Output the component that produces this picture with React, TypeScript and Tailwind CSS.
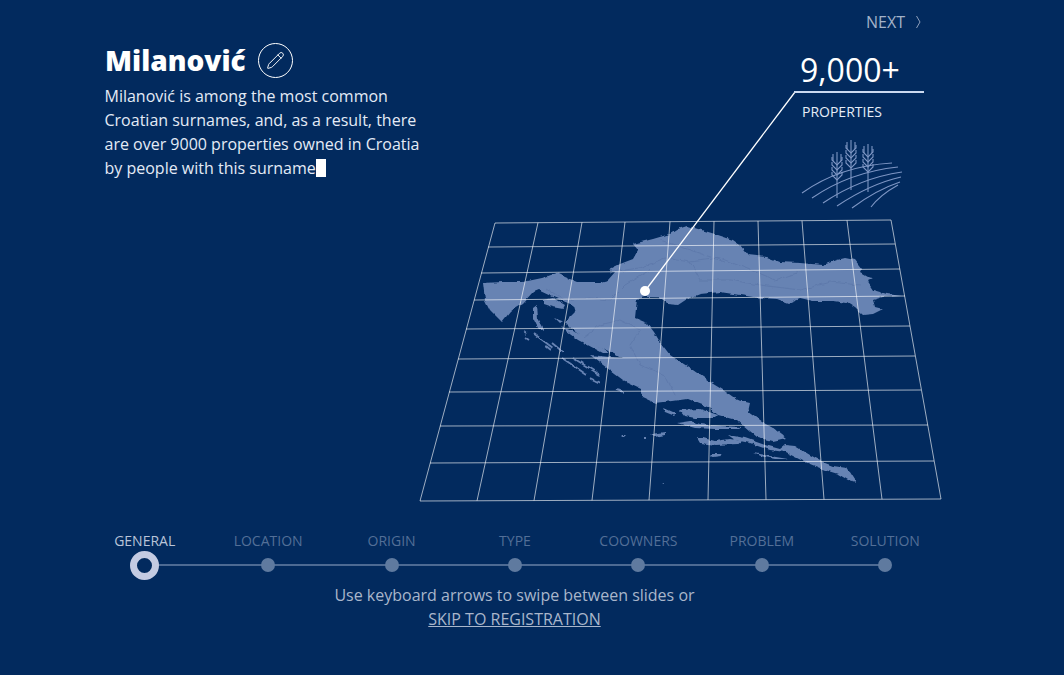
import { Pencil } from 'lucide-react';

const STEPS = ['GENERAL', 'LOCATION', 'ORIGIN', 'TYPE', 'COOWNERS', 'PROBLEM', 'SOLUTION'];

const TOP_X = [495, 538, 582, 625, 670, 714, 758, 802, 847, 891];
const BOTTOM_X = [420, 477, 534, 592, 649, 708, 766, 824, 882, 941];
const ROWS = [
  [495, 223, 891, 220],
  [488, 247, 895, 244],
  [481, 273, 900, 269],
  [474, 300, 905, 296],
  [466, 329, 910, 326],
  [458, 359, 915, 356],
  [449, 392, 921, 390],
  [440, 426, 928, 425],
  [430, 463, 934, 461],
  [420, 501, 941, 499],
];

const LAND =
  'M483 283 L503 282 L523 282 L542 278 L557 273 L565 277 L577 282 L600 282 L608 280 L615 272 L610 269 L620 264 L633 259 L638 250 L633 244 L653 239 L670 234 L678 229 L687 226 L698 229 L715 234 L733 240 L740 245 L748 255 L767 257 L780 262 L800 263 L823 265 L837 260 L845 258 L855 260 L862 269 L860 273 L867 277 L873 278 L867 281 L873 290 L887 294 L902 296 L883 297 L873 300 L875 307 L883 309 L873 314 L863 315 L855 308 L847 303 L833 301 L813 301 L800 298 L788 303 L777 299 L760 298 L733 294 L720 292 L700 294 L687 299 L678 305 L667 304 L660 297 L645 297 L637 299 L635 318 L647 323 L654 332 L660 342 L670 355 L690 368 L710 382 L723 390 L737 400 L750 403 L748 412 L762 422 L773 428 L786 438 L773 441 L757 437 L737 420 L718 415 L710 408 L687 399 L673 401 L655 403 L642 397 L640 388 L623 380 L607 368 L590 355 L610 357 L622 358 L613 353 L590 343 L573 330 L565 322 L575 312 L573 305 L553 297 L538 290 L533 292 L523 303 L515 308 L510 312 L502 322 L490 310 L485 300 Z';

const ISLANDS = [
  'M533 308 L537 305 L538 318 L543 327 L543 332 L538 328 L533 318 Z',
  'M543 300 L553 298 L565 305 L563 309 L552 307 L543 304 Z',
  'M555 318 L563 321 L560 323 Z',
  'M562 327 L577 333 L610 353 L603 353 L578 340 L567 332 Z',
  'M663 408 L672 412 L677 414 L675 416 L665 412 Z',
  'M680 410 L700 409 L718 415 L715 418 L695 418 L685 416 Z',
  'M677 423 L690 421 L700 424 L720 426 L741 427 L738 429 L715 429 L695 428 Z',
  'M697 438 L703 438 L715 441 L730 439 L742 441 L738 444 L715 445 L700 443 Z',
  'M728 435 L745 438 L765 445 L780 449 L785 445 L795 446 L810 455 L825 463 L833 466 L847 468 L856 482 L848 480 L838 474 L825 470 L805 462 L785 452 L770 450 L750 443 L735 440 Z',
  'M710 454 L720 454 L721 456 L713 457 Z',
  'M753 453 L770 456 L788 459 L775 459 L760 456 Z',
  'M650 434 L665 432 L665 435 L655 437 Z',
  'M621 435 L626 435 L624 437 Z',
  'M644 438 L646 438 L646 440 L644 440 Z',
  'M661 483 L664 483 L663 484 Z',
];

// the thin chains of islands along the coast
const STREAKS = [
  'M524 331 L527 334',
  'M525 337 L528 339',
  'M533 333 L545 342 L553 348',
  'M546 346 L551 350',
  'M552 343 L563 352',
  'M562 358 L574 366 L587 375',
  'M573 358 L586 366 L600 375',
  'M590 378 L600 383',
  'M617 390 L623 392',
  'M618 389 L623 391',
];

const BORDERS = [
  'M610 272 L640 268 L665 258 L690 262 L720 258 L745 268 L775 280 L800 272',
  'M690 262 L700 280 L730 280 L760 285 L800 290 L830 282 L860 285',
  'M583 338 L600 325 L620 320 L640 330 L630 345 L640 365 L665 375 L675 395',
  'M545 288 L565 300 L590 298 L610 300 L625 285 L650 270',
  'M660 240 L690 250 L725 262',
];

function Wheat({ x, top, bottom }: { x: number; top: number; bottom: number }) {
  const rows = [7, 12, 17, 22];
  return (
    <g>
      <path d={`M${x} ${top} L${x} ${bottom}`} />
      <path d={`M${x - 4} ${top + 2} L${x - 4} ${top + 9} M${x + 4} ${top + 2} L${x + 4} ${top + 9}`} />
      {rows.map((r) => (
        <path key={r} d={`M${x - 5} ${top + r - 2} L${x - 5} ${top + r + 1} L${x} ${top + r + 6} L${x + 5} ${top + r + 1} L${x + 5} ${top + r - 2}`} />
      ))}
    </g>
  );
}

function MapDrawing() {
  return (
    <svg width="1064" height="520" viewBox="0 0 1064 520" fill="none" className="absolute left-0 top-0">
      <defs>
        <filter id="rough" x="-5%" y="-5%" width="110%" height="110%" colorInterpolationFilters="sRGB">
          <feTurbulence type="fractalNoise" baseFrequency="0.14" numOctaves="2" seed="4" />
          <feDisplacementMap in="SourceGraphic" scale="4" xChannelSelector="R" yChannelSelector="G" />
        </filter>
      </defs>
      <g filter="url(#rough)">
        <path d={LAND} fill="#6783b3" />
        {ISLANDS.map((d) => (
          <path key={d} d={d} fill="#6783b3" />
        ))}
        {STREAKS.map((d) => (
          <path key={d} d={d} stroke="#6783b3" strokeWidth="1.8" />
        ))}
        {BORDERS.map((d) => (
          <path key={d} d={d} stroke="#5a76a8" strokeWidth="0.7" />
        ))}
      </g>
      {ROWS.map(([x1, y1, x2, y2]) => (
        <line key={y1} x1={x1} y1={y1} x2={x2} y2={y2} stroke="#ffffff" strokeOpacity="0.62" />
      ))}
      {TOP_X.map((x, i) => (
        <line key={x} x1={x} y1={223 - (i * 3) / 9} x2={BOTTOM_X[i]} y2={501 - (i * 2) / 9} stroke="#ffffff" strokeOpacity="0.62" />
      ))}

      <g stroke="#7e96c4" strokeWidth="1.1">
        <path d="M802 193 Q840 166 892 163" />
        <path d="M812 198 Q850 172 898 167" />
        <path d="M823 203 Q860 178 902 172" />
        <path d="M837 206 Q870 184 901 177" />
        <path d="M852 208 Q876 190 900 182" />
        <path d="M871 207 Q880 195 898 185" />
        <Wheat x={837} top={152} bottom={198} />
        <Wheat x={851} top={140} bottom={190} />
        <Wheat x={868} top={144} bottom={192} />
      </g>

      <path d="M645 291 L795 92" stroke="#ffffff" strokeWidth="1.3" />
      <path d="M794 92 L924 92" stroke="#cbd9f0" strokeWidth="2" />
      <circle cx="645" cy="291" r="5" fill="#ffffff" />
    </svg>
  );
}

export default function App() {
  return (
    <div className="h-[675px] w-full overflow-hidden bg-[#022a5e] font-['Open_Sans',sans-serif]">
      <div className="relative h-[520px]">
        <MapDrawing />
        <a className="absolute left-[866px] top-[12px] flex items-center text-base leading-5 text-[#a3b2c9]">
          NEXT
          <svg width="5" height="14" viewBox="0 0 5 14" fill="none" stroke="#8fa0bb" className="ml-[11px]">
            <path d="M0.5 1 L4 7 L0.5 13" />
          </svg>
        </a>
        <div className="absolute left-[800px] top-[50px] text-[32px] leading-10 text-white">9,000+</div>
        <div className="absolute left-[802px] top-[102px] text-sm leading-5 text-[#e6edf8]">PROPERTIES</div>

        <div className="relative w-[340px] pl-[105px] pt-[40px]">
          <div className="flex items-center gap-[12px]">
            <h1 className="text-[28px] font-extrabold leading-10 text-white">Milanović</h1>
            <span className="flex h-[35px] w-[35px] items-center justify-center rounded-full border border-white">
              <Pencil size={19} strokeWidth={1.2} className="text-white" />
            </span>
          </div>
          <p className="-ml-[0.5px] w-[330px] pt-[4px] text-base leading-6 text-[#e4ebf6]">
            Milanović is among the most common Croatian surnames, and, as a result, there are over 9000 properties owned in Croatia by people with this surname
            <span className="inline-block h-[18px] w-[10px] translate-y-[3px] bg-white" />
          </p>
        </div>
      </div>

      <div className="relative ml-[83px] grid w-[864px] grid-cols-7">
        <div className="absolute left-[62px] right-[62px] top-[44px] h-[2px] bg-[#4d6a93]" />
        {STEPS.map((step, i) => (
          <div key={step} className="relative flex flex-col items-center">
            <span className={`h-[31px] pt-[11px] text-sm leading-5 ${i === 0 ? 'text-[#b9c4d8]' : 'text-[#536f97]'}`}>{step}</span>
            <div className="flex h-[28px] items-center">
              {i === 0 ? (
                <span className="h-[29px] w-[29px] rounded-full border-[7px] border-[#c4cbe2] bg-[#022a5e]" />
              ) : (
                <span className="h-[14px] w-[14px] rounded-full bg-[#5f7a9f]" />
              )}
            </div>
          </div>
        ))}
      </div>

      <div className="ml-[83px] w-[863px] pt-[4px] text-center text-base leading-6 text-[#a9b6cb]">
        <p>Use keyboard arrows to swipe between slides or</p>
        <a className="underline">SKIP TO REGISTRATION</a>
      </div>
    </div>
  );
}
